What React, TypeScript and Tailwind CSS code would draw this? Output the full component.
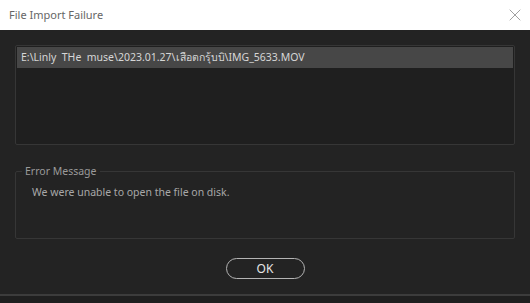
import { X } from "lucide-react";

export default function App() {
  return (
    <div
      className="w-[530px] h-[303px] flex flex-col bg-[#232323] overflow-hidden"
      style={{ fontFamily: "'Noto Sans', 'Open Sans', sans-serif" }}
    >
      {/* Title bar */}
      <div className="h-[30px] bg-white flex items-center justify-between pl-[9px] pr-[5px]">
        <span className="text-[11px] text-[#666666]">File Import Failure</span>
        <X className="w-[20px] h-[20px] text-[#808080]" strokeWidth={0.9} />
      </div>

      {/* Body */}
      <div className="flex-1 flex flex-col px-[15px] pt-[15px]">
        {/* File list */}
        <div className="h-[100px] bg-[#1f1f1f] border border-[#363636] rounded-[2px] p-[1px]">
          <div className="h-[21px] bg-[#474747] flex items-center pl-[4px] text-[10.5px] text-[#d6d6d6] whitespace-pre">
            E:\Linly  THe  muse\2023.01.27\เสือตกรุ้บบิ\IMG_5633.MOV
          </div>
        </div>

        {/* Error message group */}
        <fieldset className="mt-[21px] h-[73px] border border-[#363636] rounded-[2px] pl-[16px] pr-2 pb-2">
          <legend className="ml-[-10px] px-[3px] text-[10.5px] text-[#9a9a9a] leading-none">
            Error Message
          </legend>
          <p className="mt-[8px] text-[10.5px] text-[#a8a8a8]">
            We were unable to open the file on disk.
          </p>
        </fieldset>

        {/* Buttons */}
        <div className="flex justify-center mt-[19px]">
          <button className="w-[79px] h-[21px] rounded-full border border-[#b4b4b4] text-[12px] text-[#e6e6e6] leading-none flex items-center justify-center">
            OK
          </button>
        </div>
      </div>

      {/* Footer strip */}
      <div className="h-[9px] border-t-2 border-[#3c3c3c] bg-[#1f1f1f]" />
    </div>
  );
}
